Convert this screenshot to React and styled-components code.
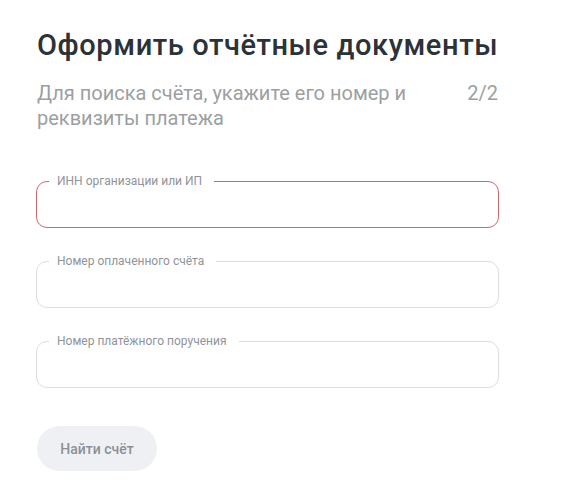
import React from "react";
import styled, { createGlobalStyle } from "styled-components";

const GlobalStyle = createGlobalStyle`
  html, body {
    margin: 0;
    padding: 0;
    background: #ffffff;
    font-family: Roboto, "Noto Sans", Arial, sans-serif;
  }
`;

const fields = [
  { label: "ИНН организации или ИП", error: true },
  { label: "Номер оплаченного счёта" },
  { label: "Номер платёжного поручения" },
];

const App = () => {
  return (
    <>
      <GlobalStyle />
      <Page>
        <Title>Оформить отчётные документы</Title>
        <SubRow>
          <Subtitle>Для поиска счёта, укажите его номер и реквизиты платежа</Subtitle>
          <Step>2/2</Step>
        </SubRow>
        <Form>
          {fields.map((f) => (
            <Field key={f.label} $error={f.error}>
              <Legend>{f.label}</Legend>
              <Input type="text" />
            </Field>
          ))}
        </Form>
        <Button type="button">Найти счёт</Button>
      </Page>
    </>
  );
};

const Page = styled.div`
  width: 463px;
  padding: 25px 0 0 36px;
  display: flex;
  flex-direction: column;
`;

const Title = styled.h1`
  margin: 0 0 0 1px;
  font-size: 29px;
  font-weight: 500;
  letter-spacing: 0.6px;
  line-height: 40px;
  color: #2b3238;
  white-space: nowrap;
`;

const SubRow = styled.div`
  display: flex;
  justify-content: space-between;
  align-items: flex-start;
  margin: 16px 0 0 1px;
`;

const Subtitle = styled.p`
  margin: 0;
  width: 390px;
  font-size: 20px;
  line-height: 25px;
  color: #9b9fa3;
`;

const Step = styled.span`
  font-size: 20px;
  line-height: 25px;
  color: #9b9fa3;
  margin-right: 1px;
`;

const Form = styled.div`
  display: flex;
  flex-direction: column;
  gap: 26px;
  margin-top: 43px;
`;

const Field = styled.fieldset`
  margin: 0;
  padding: 0 12px;
  height: 54px;
  box-sizing: border-box;
  border: 1px solid ${(p) => (p.$error ? "#c96b6d" : "#dcdee1")};
  border-radius: 11px;
`;

const Legend = styled.legend`
  margin-left: 0;
  padding: 0 12px 0 8px;
  font-size: 12px;
  line-height: 14px;
  color: #8f9499;
`;

const Input = styled.input`
  width: 100%;
  height: 38px;
  border: none;
  outline: none;
  background: transparent;
  font-family: inherit;
  font-size: 15px;
  color: #2b3238;
`;

const Button = styled.button`
  align-self: flex-start;
  margin: 38px 0 0 1px;
  width: 120px;
  height: 45px;
  border: none;
  border-radius: 23px;
  background: #eff0f3;
  font-family: inherit;
  font-size: 14px;
  font-weight: 500;
  color: #8b9096;
  cursor: pointer;
`;

export default App;
